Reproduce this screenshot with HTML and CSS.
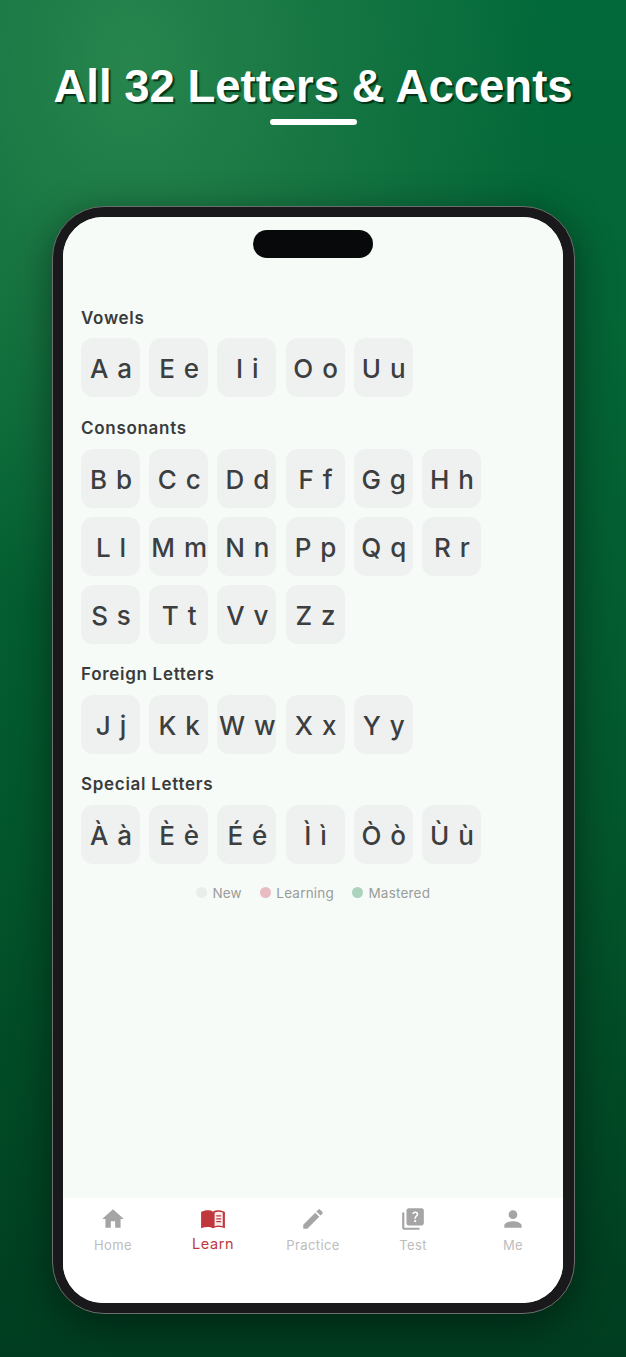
FILE: index.html
```html
<!DOCTYPE html>
<html lang="en">
<head>
    <meta charset="UTF-8">
    <meta name="viewport" content="width=device-width, initial-scale=1.0">
    <title>All 32 Letters &amp; Accents</title>
    <link rel="stylesheet" href="styles.css">
</head>
<body>
    <header class="promo">
        <h1>All 32 Letters &amp; Accents</h1>
        <div class="promo-rule"></div>
    </header>

    <div class="phone">
        <div class="screen">
            <div class="island"></div>

            <main class="content">
                <h2 class="group-title">Vowels</h2>
                <div class="letters">
                    <div class="letter">A a</div>
                    <div class="letter">E e</div>
                    <div class="letter">I i</div>
                    <div class="letter">O o</div>
                    <div class="letter">U u</div>
                </div>

                <h2 class="group-title">Consonants</h2>
                <div class="letters">
                    <div class="letter">B b</div>
                    <div class="letter">C c</div>
                    <div class="letter">D d</div>
                    <div class="letter">F f</div>
                    <div class="letter">G g</div>
                    <div class="letter">H h</div>
                    <div class="letter">L l</div>
                    <div class="letter">M m</div>
                    <div class="letter">N n</div>
                    <div class="letter">P p</div>
                    <div class="letter">Q q</div>
                    <div class="letter">R r</div>
                    <div class="letter">S s</div>
                    <div class="letter">T t</div>
                    <div class="letter">V v</div>
                    <div class="letter">Z z</div>
                </div>

                <h2 class="group-title">Foreign Letters</h2>
                <div class="letters">
                    <div class="letter">J j</div>
                    <div class="letter">K k</div>
                    <div class="letter">W w</div>
                    <div class="letter">X x</div>
                    <div class="letter">Y y</div>
                </div>

                <h2 class="group-title">Special Letters</h2>
                <div class="letters">
                    <div class="letter">À à</div>
                    <div class="letter">È è</div>
                    <div class="letter">É é</div>
                    <div class="letter">Ì ì</div>
                    <div class="letter">Ò ò</div>
                    <div class="letter">Ù ù</div>
                </div>

                <div class="legend">
                    <div class="legend-item"><span class="dot dot-new"></span>New</div>
                    <div class="legend-item"><span class="dot dot-learning"></span>Learning</div>
                    <div class="legend-item"><span class="dot dot-mastered"></span>Mastered</div>
                </div>
            </main>

            <nav class="tabs">
                <div class="tab">
                    <svg class="tab-icon" viewBox="0 0 24 24"><path d="M10 20v-6h4v6h5v-8h3L12 3 2 12h3v8z"/></svg>
                    <span>Home</span>
                </div>
                <div class="tab active">
                    <svg class="tab-icon" viewBox="0 0 24 24">
                        <path d="M1 5.6C3 4.4 5 4 7 4c2 0 3.800.4 5 1.300V20.500c-1.400-.8-3.200-1.200-5-1.200-2 0-4 .4-6 1.200z"/>
                        <path d="M23 5.600C21 4.400 19 4 17 4c-2 0-3.800.4-5 1.300V20.500c1.400-.8 3.200-1.200 5-1.200 2 0 4 .4 6 1.200z"/>
                        <path class="page" d="M13.500 6.200c1-.6 2.300-.9 3.500-.9 1.300 0 2.600.2 4 .8v12.500c-1.300-.4-2.700-.6-4-.6-1.200 0-2.500.2-3.500.7z"/>
                        <path d="M15 8.500h4.500v1.200H15zM15 11.200h4.500v1.200H15zM15 13.900h4.500v1.200H15z"/>
                    </svg>
                    <span>Learn</span>
                </div>
                <div class="tab">
                    <svg class="tab-icon" viewBox="0 0 24 24"><path d="M3 17.250V21h3.750L17.810 9.940l-3.750-3.750L3 17.250zM20.710 7.040c.39-.39.39-1.020 0-1.410l-2.340-2.340c-.39-.39-1.020-.39-1.410 0l-1.830 1.830 3.750 3.750 1.830-1.830z"/></svg>
                    <span>Practice</span>
                </div>
                <div class="tab">
                    <svg class="tab-icon" viewBox="0 0 24 24"><path d="M4 6H2v14c0 1.100.9 2 2 2h14v-2H4V6z"/><path d="M20 2H8c-1.100 0-2 .9-2 2v12c0 1.100.9 2 2 2h12c1.100 0 2-.9 2-2V4c0-1.100-.9-2-2-2zm-5.990 13c-.59 0-1.050-.47-1.050-1.050 0-.59.47-1.040 1.050-1.040.59 0 1.040.45 1.040 1.040-.01.58-.45 1.050-1.040 1.050zm2.500-6.170c-.63.93-1.230 1.210-1.560 1.810-.13.24-.18.4-.18 1.180h-1.520c0-.41-.06-1.080.26-1.650.41-.73 1.180-1.160 1.630-1.800.48-.68.21-1.940-1.140-1.940-.88 0-1.320.67-1.500 1.230l-1.370-.57C11.510 5.960 12.520 5 13.990 5c1.230 0 2.080.56 2.510 1.260.37.61.58 1.730.01 2.570z"/></svg>
                    <span>Test</span>
                </div>
                <div class="tab">
                    <svg class="tab-icon" viewBox="0 0 24 24"><path d="M12 12c2.210 0 4-1.790 4-4s-1.790-4-4-4-4 1.790-4 4 1.790 4 4 4zm0 2c-2.670 0-8 1.340-8 4v2h16v-2c0-2.660-5.330-4-8-4z"/></svg>
                    <span>Me</span>
                </div>
            </nav>
        </div>
    </div>
</body>
</html>
```

FILE: styles.css
```css
* {
    box-sizing: border-box;
}

html, body {
    margin: 0;
    height: 100%;
}

body {
    width: 626px;
    height: 1357px;
    overflow: hidden;
    font-family: Inter, "Liberation Sans", sans-serif;
    background:
        radial-gradient(ellipse 420px 560px at 130px 60px, rgba(48, 140, 82, 0.8) 0%, rgba(40, 130, 75, 0.55) 45%, rgba(30, 120, 70, 0) 100%),
        linear-gradient(180deg, #02693a 0%, #046535 25%, #03572c 60%, #003d20 100%);
}

.promo {
    padding-top: 60px;
    height: 206px;
    text-align: center;
}

.promo h1 {
    margin: 0;
    font-family: "Liberation Sans", Arial, sans-serif;
    font-size: 45.500px;
    line-height: 54px;
    font-weight: 700;
    color: #fff;
    white-space: nowrap;
    text-shadow: 2px 2px 1px rgba(0, 40, 15, 0.85);
}

.promo-rule {
    width: 87px;
    height: 6px;
    margin: 5px auto 0;
    background: #fff;
    border-radius: 3px;
}

.phone {
    width: 523px;
    height: 1107.500px;
    margin-left: 52px;
    padding: 10px 11px 10px 10px;
    background: #19191b;
    border: 1px solid #6b6f6d;
    border-radius: 52px;
    box-shadow: 0 10px 40px rgba(0, 0, 0, 0.45);
}

.screen {
    position: relative;
    height: 100%;
    display: flex;
    flex-direction: column;
    background: #fff;
    border-radius: 40px;
    overflow: hidden;
}

.island {
    position: absolute;
    top: 13px;
    left: 190px;
    width: 120px;
    height: 28px;
    background: #08090a;
    border-radius: 14px;
}

.content {
    flex: 1;
    padding: 91.500px 18px 0;
    background: #f6fbf8;
}

.group-title {
    margin: 0 0 10.800px;
    font-size: 17px;
    line-height: 19px;
    font-weight: 600;
    letter-spacing: 0.7px;
    color: #3a3c3c;
}

.letters {
    display: flex;
    flex-wrap: wrap;
    gap: 9px 9.200px;
    margin-bottom: 21.500px;
}

.letter {
    width: 59px;
    height: 59px;
    padding: 2px 0 0 2px;
    display: flex;
    align-items: center;
    justify-content: center;
    background: #eef1f0;
    border-radius: 12px;
    font-size: 26px;
    font-weight: 500;
    letter-spacing: 1px;
    white-space: nowrap;
    color: #3c3e3f;
}

.legend {
    display: flex;
    justify-content: center;
    gap: 18px;
    margin-top: -2px;
}

.legend-item {
    display: flex;
    align-items: center;
    gap: 5px;
    font-size: 13.500px;
    line-height: 18px;
    letter-spacing: 0.2px;
    color: #9a9c9b;
}

.dot {
    width: 11.500px;
    height: 11.500px;
    border-radius: 50%;
}

.dot-new {
    background: #e9eeeb;
}

.dot-learning {
    background: #e8bcc1;
}

.dot-mastered {
    background: #acd3bd;
}

.tabs {
    height: 104.500px;
    display: flex;
    background: #fff;
}

.tab {
    flex: 1;
    display: flex;
    flex-direction: column;
    align-items: center;
    padding-top: 8px;
    font-size: 13px;
    line-height: 16px;
    letter-spacing: 0.4px;
    color: #bdbdbd;
}

.tab-icon {
    width: 26px;
    height: 26px;
    margin-bottom: 5px;
    fill: #a6a4a4;
}

.tab.active {
    font-size: 14.500px;
    letter-spacing: 0.6px;
    color: #c0383d;
}

.tab.active .tab-icon {
    margin-bottom: 3.500px;
    fill: #c0383d;
}

.tab.active .page {
    fill: #fbeeee;
}
```
